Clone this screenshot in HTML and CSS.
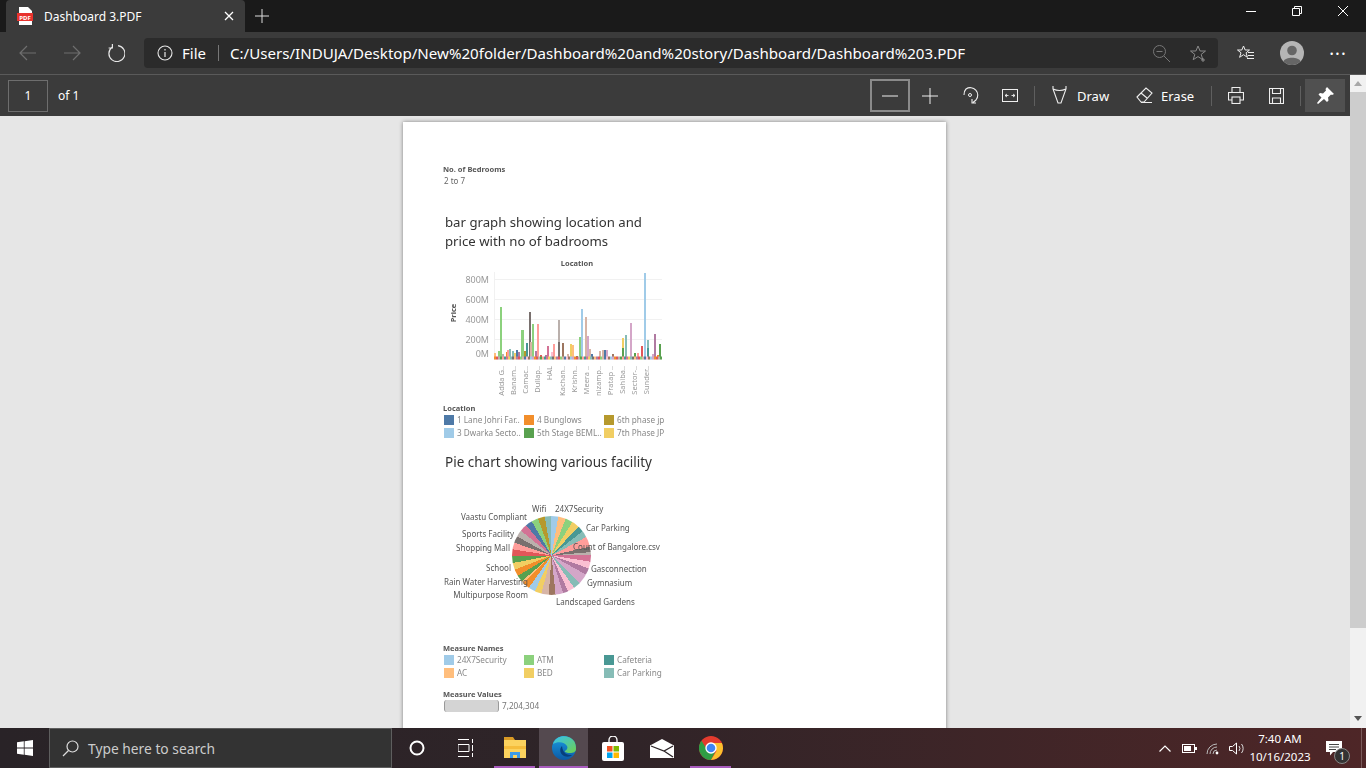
FILE: index.html
```html
<!DOCTYPE html>
<html lang="en">
<head>
    <meta charset="UTF-8">
    <title>Dashboard 3.PDF</title>
    <link rel="stylesheet" href="styles.css">
</head>
<body>
    <div class="titlebar">
        <div class="tab">
            <svg class="tab-icon" width="16" height="18" viewBox="0 0 16 18">
                <path d="M2 0h9l4 4v14H2z" fill="#fff"/>
                <rect x="0" y="6" width="16" height="8" fill="#e8322d"/>
                <text x="8" y="12.5" class="tab-icon-text">PDF</text>
            </svg>
            <span class="tab-title">Dashboard 3.PDF</span>
            <svg class="tab-close" width="10" height="10" viewBox="0 0 10 10"><path d="M1 1l8 8M9 1l-8 8" stroke="#fff" stroke-width="1.3"/></svg>
        </div>
        <svg class="new-tab" width="14" height="14" viewBox="0 0 14 14"><path d="M7 0v14M0 7h14" stroke="#ddd"/></svg>
        <div class="window-controls">
            <svg width="10" height="10" viewBox="0 0 10 10"><path d="M0 5.5h10" stroke="#fff"/></svg>
            <svg width="10" height="10" viewBox="0 0 10 10"><path d="M.5 2.5h7v7h-7zM2.5 2.5v-2h7v7h-2" fill="none" stroke="#fff"/></svg>
            <svg width="10" height="10" viewBox="0 0 10 10"><path d="M0 0l10 10M10 0L0 10" stroke="#fff"/></svg>
        </div>
    </div>

    <div class="addressbar">
        <button class="nav-btn"><svg width="18" height="16" viewBox="0 0 18 16"><path d="M17 8H1M8 1L1 8l7 7" fill="none" stroke="#6f6f6f" stroke-width="1.2"/></svg></button>
        <button class="nav-btn"><svg width="18" height="16" viewBox="0 0 18 16"><path d="M1 8h16M10 1l7 7-7 7" fill="none" stroke="#6f6f6f" stroke-width="1.2"/></svg></button>
        <button class="nav-btn"><svg width="18" height="18" viewBox="0 0 18 18"><path d="M5 3.2A8 8 0 1 0 11 1.6M5.4 0v4H1.6" fill="none" stroke="#e6e6e6" stroke-width="1.2"/></svg></button>
        <div class="address">
            <svg class="info-icon" width="16" height="16" viewBox="0 0 16 16"><circle cx="8" cy="8" r="7" fill="none" stroke="#e6e6e6" stroke-width="1.1"/><path d="M8 7v5M8 4v1.4" stroke="#e6e6e6" stroke-width="1.2"/></svg>
            <span class="scheme">File</span>
            <span class="address-divider"></span>
            <span class="url">C:/Users/INDUJA/Desktop/New%20folder/Dashboard%20and%20story/Dashboard/Dashboard%203.PDF</span>
            <svg class="zoom-out" width="17" height="17" viewBox="0 0 17 17"><circle cx="6.5" cy="6.5" r="6" fill="none" stroke="#777"/><path d="M11 11l6 6M3.5 6.5h6" stroke="#777"/></svg>
            <svg class="fav" width="17" height="17" viewBox="0 0 17 17"><path d="M8 1l2.1 5h5.4l-4.300 3.400 1.600 5.300L8 11.600l-4.800 3.100 1.600-5.300L.5 6H5.900z" fill="none" stroke="#8a8a8a"/><path d="M13 13v4M11 15h4" stroke="#8a8a8a"/></svg>
        </div>
        <div class="side-buttons">
            <button class="side-btn"><svg width="18" height="17" viewBox="0 0 18 17"><path d="M6.500 1l1.700 4h4.300l-3.400 2.800 1.300 4.500-3.900-2.600-3.900 2.600L4 7.800.5 5h4.300z" fill="none" stroke="#eee"/><path d="M11 7.500h6M11 10.500h6M10 13.500h7" stroke="#eee"/></svg></button>
            <button class="side-btn"><svg width="24" height="24" viewBox="0 0 24 24"><circle cx="12" cy="12" r="12" fill="#b5b5b5"/><circle cx="12" cy="9.500" r="4.800" fill="#666"/><path d="M3.500 20.500C5 15.500 19 15.500 20.500 20.500A12 12 0 0 1 3.500 20.500z" fill="#666"/></svg></button>
            <button class="side-btn more">&middot;&middot;&middot;</button>
        </div>
    </div>

    <div class="workspace">
        <div class="viewer-column">
            <div class="pdf-toolbar">
                <div class="page-box">1</div>
                <span class="page-count">of 1</span>
                <div class="pdf-tools">
                    <button class="tool-btn tool-active"><svg width="16" height="2" viewBox="0 0 16 2"><path d="M0 1h16" stroke="#eee"/></svg></button>
                    <button class="tool-btn"><svg width="16" height="16" viewBox="0 0 16 16"><path d="M8 0v16M0 8h16" stroke="#eee"/></svg></button>
                    <button class="tool-btn"><svg width="17" height="19" viewBox="0 0 17 19"><path d="M2 9a7.500 7.500 0 0 1 2-6 7.500 7.500 0 0 1 10 11l-3 2.500M10 13v4h4" fill="none" stroke="#eee" stroke-width="1.100"/><circle cx="8" cy="9" r="1.500" fill="none" stroke="#eee"/></svg></button>
                    <button class="tool-btn"><svg width="16" height="13" viewBox="0 0 16 13"><rect x=".5" y=".5" width="15" height="12" fill="none" stroke="#eee"/><path d="M3 6.500h3.500M3 6.500l2-1.500M3 6.500l2 1.500M9.500 6.500H13M13 6.500l-2-1.500M13 6.500l-2 1.500" fill="none" stroke="#eee" stroke-width=".9"/></svg></button>
                    <span class="tool-divider"></span>
                    <button class="label-btn draw-btn"><svg width="15" height="20" viewBox="0 0 15 20"><path d="M1 0v3l5 14h3l5-14V0M1 3q6.500 3 13 0" fill="none" stroke="#eee" stroke-width="1.100"/></svg>Draw</button>
                    <button class="label-btn erase-btn"><svg width="17" height="17" viewBox="0 0 17 17"><path d="M1 10l9-9 6 5-8 9H5zM5 6l6 5" fill="none" stroke="#eee" stroke-width="1.100"/><path d="M5 15.500h11" stroke="#eee"/></svg>Erase</button>
                    <span class="tool-divider after-erase"></span>
                    <button class="tool-btn"><svg width="16" height="17" viewBox="0 0 16 17"><path d="M4 5V.5h8V5M4 13H.5V5.500h15V13H12" fill="none" stroke="#eee" stroke-width="1.100"/><rect x="4" y="10" width="8" height="6.500" fill="none" stroke="#eee" stroke-width="1.100"/></svg></button>
                    <button class="tool-btn"><svg width="15" height="16" viewBox="0 0 15 16"><path d="M.5.500h14v15H.5zM3.500.500v5h8v-5M3.500 15.500V10h8v5.500" fill="none" stroke="#eee" stroke-width="1.100"/></svg></button>
                    <span class="tool-divider"></span>
                    <button class="tool-btn pin-btn"><svg width="17" height="17" viewBox="0 0 17 17"><path d="M10 0l7 7-2 1-1-.5-3 3 .5 3-1.500 1.500-3-3L1 17l-1-1 4.500-5.500-3-3L3 6l3 .5 3-3L8.500 2z" fill="#fff"/></svg></button>
                </div>
            </div>

            <div class="viewer">
                <div class="page">
                    <div class="page-content">
                        <div class="filter-block">
                            <div class="legend-title">No. of Bedrooms</div>
                            <div class="filter-value">2 to 7</div>
                        </div>

                        <h2 class="chart-title bar-title">bar graph showing location and<br>price with no of badrooms</h2>

                        <svg class="bar-chart" width="220" height="147" viewBox="443 256 220 147">
                            <defs>
                                <pattern id="smallBars" x="494" y="0" width="40" height="10" patternUnits="userSpaceOnUse">
                                    <rect x="0" width="2" height="10" fill="#f28e2b"/><rect x="2" width="2" height="10" fill="#e15759"/>
                                    <rect x="4" width="2" height="10" fill="#bab0ac"/><rect x="6" width="2" height="10" fill="#59a14f"/>
                                    <rect x="8" width="2" height="10" fill="#ff9d9a"/><rect x="10" width="2" height="10" fill="#499894"/>
                                    <rect x="12" width="2" height="10" fill="#d37295"/><rect x="14" width="2" height="10" fill="#f1ce63"/>
                                    <rect x="16" width="2" height="10" fill="#86bcb6"/><rect x="18" width="2" height="10" fill="#79706e"/>
                                    <rect x="20" width="2" height="10" fill="#ffbe7d"/><rect x="22" width="2" height="10" fill="#b07aa1"/>
                                    <rect x="24" width="2" height="10" fill="#e15759"/><rect x="26" width="2" height="10" fill="#8cd17d"/>
                                    <rect x="28" width="2" height="10" fill="#d7b5a6"/><rect x="30" width="2" height="10" fill="#4e79a7"/>
                                    <rect x="32" width="2" height="10" fill="#fabfd2"/><rect x="34" width="2" height="10" fill="#9d7660"/>
                                    <rect x="36" width="2" height="10" fill="#a0cbe8"/><rect x="38" width="2" height="10" fill="#d4a6c8"/>
                                </pattern>
                            </defs>
                            <path class="grid" d="M494 279.500H662M494 299.500H662M494 319.500H662M494 339.500H662M494 359.500H662M494.500 272V360"/>
                            <text class="axis-title" x="577" y="266" text-anchor="middle">Location</text>
                            <text class="axis-title" transform="translate(456 313) rotate(-90)" text-anchor="middle">Price</text>
                            <text class="axis-value" x="489" y="283">800M</text>
                            <text class="axis-value" x="489" y="303">600M</text>
                            <text class="axis-value" x="489" y="323">400M</text>
                            <text class="axis-value" x="489" y="343">200M</text>
                            <text class="axis-value" x="489" y="357">0M</text>

                            <rect x="494" y="353" width="2" height="6" fill="#ffbe7d"/>
                            <rect x="498" y="351" width="2" height="8" fill="#8cd17d"/>
                            <rect x="500" y="307" width="2" height="52" fill="#8cd17d"/>
                            <rect x="502" y="354" width="2" height="5" fill="#bab0ac"/>
                            <rect x="506" y="352" width="2" height="7" fill="#f28e2b"/>
                            <rect x="507" y="350" width="2" height="9" fill="#ff9d9a"/>
                            <rect x="509" y="349" width="2" height="10" fill="#86bcb6"/>
                            <rect x="512" y="351" width="2" height="8" fill="#86bcb6"/>
                            <rect x="514" y="353" width="2" height="6" fill="#f1ce63"/>
                            <rect x="516" y="350" width="2" height="9" fill="#4e79a7"/>
                            <rect x="518" y="352" width="2" height="7" fill="#b07aa1"/>
                            <rect x="521" y="330" width="3" height="29" fill="#8cd17d"/>
                            <rect x="524" y="351" width="2" height="8" fill="#b6992d"/>
                            <rect x="526" y="343" width="2" height="16" fill="#499894"/>
                            <rect x="529" y="312" width="2" height="47" fill="#79706e"/>
                            <rect x="530" y="342" width="2" height="17" fill="#d7b5a6"/>
                            <rect x="532" y="324" width="2" height="35" fill="#8cd17d"/>
                            <rect x="535" y="351" width="2" height="8" fill="#b07aa1"/>
                            <rect x="537" y="324" width="2" height="35" fill="#ff9d9a"/>
                            <rect x="540" y="355" width="2" height="4" fill="#e15759"/>
                            <rect x="547" y="346" width="2" height="13" fill="#d37295"/>
                            <rect x="545" y="355" width="2" height="4" fill="#b07aa1"/>
                            <rect x="553" y="344" width="2" height="15" fill="#ff9d9a"/>
                            <rect x="551" y="352" width="2" height="7" fill="#fabfd2"/>
                            <rect x="558" y="320" width="2" height="39" fill="#bab0ac"/>
                            <rect x="558" y="342" width="2" height="17" fill="#79706e"/>
                            <rect x="562" y="343" width="2" height="16" fill="#9d7660"/>
                            <rect x="567" y="354" width="2" height="5" fill="#d7b5a6"/>
                            <rect x="570" y="344" width="2" height="15" fill="#f1ce63"/>
                            <rect x="572" y="345" width="2" height="14" fill="#ffbe7d"/>
                            <rect x="576" y="356" width="2" height="3" fill="#59a14f"/>
                            <rect x="579" y="337" width="2" height="22" fill="#8cd17d"/>
                            <rect x="581" y="309" width="2" height="50" fill="#a0cbe8"/>
                            <rect x="585" y="317" width="2" height="42" fill="#d7b5a6"/>
                            <rect x="587" y="336" width="2" height="23" fill="#d4a6c8"/>
                            <rect x="589" y="349" width="2" height="10" fill="#d7b5a6"/>
                            <rect x="591" y="354" width="2" height="5" fill="#4e79a7"/>
                            <rect x="599" y="351" width="2" height="8" fill="#d7b5a6"/>
                            <rect x="602" y="350" width="2" height="9" fill="#d7b5a6"/>
                            <rect x="604" y="350" width="2" height="9" fill="#4e79a7"/>
                            <rect x="606" y="350" width="2" height="9" fill="#d4a6c8"/>
                            <rect x="612" y="354" width="2" height="5" fill="#9d7660"/>
                            <rect x="622" y="338" width="2" height="21" fill="#f1ce63"/>
                            <rect x="622" y="348" width="2" height="11" fill="#59a14f"/>
                            <rect x="625" y="335" width="2" height="24" fill="#86bcb6"/>
                            <rect x="630" y="323" width="2" height="36" fill="#d4a6c8"/>
                            <rect x="634" y="353" width="2" height="6" fill="#59a14f"/>
                            <rect x="637" y="353" width="2" height="6" fill="#ff9d9a"/>
                            <rect x="641" y="346" width="2" height="13" fill="#e15759"/>
                            <rect x="644" y="273" width="2" height="86" fill="#a0cbe8"/>
                            <rect x="647" y="340" width="2" height="19" fill="#86bcb6"/>
                            <rect x="647" y="348" width="2" height="11" fill="#499894"/>
                            <rect x="652" y="354" width="2" height="5" fill="#d4a6c8"/>
                            <rect x="654" y="334" width="2" height="25" fill="#b07aa1"/>
                            <rect x="657" y="355" width="2" height="4" fill="#f28e2b"/>
                            <rect x="659" y="344" width="2" height="15" fill="#59a14f"/>
                            <rect x="494" y="356.500" width="168" height="3" fill="url(#smallBars)"/>

                            <text class="axis-label" transform="translate(504 366) rotate(-90)">Adda G..</text>
                            <text class="axis-label" transform="translate(516 366) rotate(-90)">Banam..</text>
                            <text class="axis-label" transform="translate(528 366) rotate(-90)">Camac..</text>
                            <text class="axis-label" transform="translate(540 366) rotate(-90)">Dullap..</text>
                            <text class="axis-label" transform="translate(552 366) rotate(-90)">HAL</text>
                            <text class="axis-label" transform="translate(565 366) rotate(-90)">Kachan..</text>
                            <text class="axis-label" transform="translate(577 366) rotate(-90)">Krishn..</text>
                            <text class="axis-label" transform="translate(589 366) rotate(-90)">Meera ..</text>
                            <text class="axis-label" transform="translate(601 366) rotate(-90)">nizamp..</text>
                            <text class="axis-label" transform="translate(613 366) rotate(-90)">Pratap ..</text>
                            <text class="axis-label" transform="translate(625 366) rotate(-90)">Sahiba..</text>
                            <text class="axis-label" transform="translate(637 366) rotate(-90)">Sector-..</text>
                            <text class="axis-label" transform="translate(649 366) rotate(-90)">Sunder..</text>
                        </svg>

                        <div class="legend location-legend">
                            <div class="legend-title">Location</div>
                            <div class="legend-grid">
                                <div class="legend-item"><span class="swatch c-blue"></span>1 Lane Johri Far..</div>
                                <div class="legend-item"><span class="swatch c-orange"></span>4 Bunglows</div>
                                <div class="legend-item"><span class="swatch c-olive"></span>6th phase jp</div>
                                <div class="legend-item"><span class="swatch c-lightblue"></span>3 Dwarka Secto..</div>
                                <div class="legend-item"><span class="swatch c-green"></span>5th Stage BEML..</div>
                                <div class="legend-item"><span class="swatch c-yellow"></span>7th Phase JP</div>
                            </div>
                        </div>

                        <h2 class="chart-title pie-title">Pie chart showing various facility</h2>

                        <div class="pie-chart">
                            <div class="pie"></div>
                            <svg class="pie-labels" width="225" height="112" viewBox="440 500 225 112">
                                <text x="532" y="512">Wifi</text>
                                <text x="555" y="512">24X7Security</text>
                                <text x="586" y="531">Car Parking</text>
                                <text x="527" y="520" text-anchor="end">Vaastu Compliant</text>
                                <text x="514" y="537" text-anchor="end">Sports Facility</text>
                                <text x="510" y="551" text-anchor="end">Shopping Mall</text>
                                <text x="573" y="550">Count of Bangalore.csv</text>
                                <text x="511" y="571" text-anchor="end">School</text>
                                <text x="591" y="572">Gasconnection</text>
                                <text x="587" y="586">Gymnasium</text>
                                <text x="528" y="585" text-anchor="end">Rain Water Harvesting</text>
                                <text x="528" y="598" text-anchor="end">Multipurpose Room</text>
                                <text x="556" y="605">Landscaped Gardens</text>
                            </svg>
                        </div>

                        <div class="legend measure-legend">
                            <div class="legend-title">Measure Names</div>
                            <div class="legend-grid">
                                <div class="legend-item"><span class="swatch c-lightblue"></span>24X7Security</div>
                                <div class="legend-item"><span class="swatch c-lightgreen"></span>ATM</div>
                                <div class="legend-item"><span class="swatch c-teal"></span>Cafeteria</div>
                                <div class="legend-item"><span class="swatch c-peach"></span>AC</div>
                                <div class="legend-item"><span class="swatch c-yellow"></span>BED</div>
                                <div class="legend-item"><span class="swatch c-lightteal"></span>Car Parking</div>
                            </div>
                        </div>

                        <div class="legend values-legend">
                            <div class="legend-title">Measure Values</div>
                            <div class="value-row"><span class="value-bar"></span>7,204,304</div>
                        </div>
                    </div>
                </div>
            </div>
        </div>
        <div class="scrollbar">
            <span class="arrow-up"></span>
            <div class="thumb"></div>
            <span class="arrow-down"></span>
        </div>
    </div>

    <div class="taskbar">
        <div class="start"><svg width="16" height="16" viewBox="0 0 16 16"><path d="M0 2.300l6.800-1v6.300H0zM7.600 1.200L16 0v7.600H7.600zM0 8.400h6.800v6.300l-6.800-1zM7.600 8.400H16V16l-8.400-1.200z" fill="#fff"/></svg></div>
        <div class="search">
            <svg width="17" height="17" viewBox="0 0 17 17"><circle cx="10.500" cy="6.500" r="5.500" fill="none" stroke="#ddd" stroke-width="1.200"/><path d="M6.500 10.500L1 16" stroke="#ddd" stroke-width="1.300"/></svg>
            <span>Type here to search</span>
        </div>
        <div class="task-btn"><svg width="16" height="16" viewBox="0 0 16 16"><circle cx="8" cy="8" r="6.500" fill="none" stroke="#fff" stroke-width="2"/></svg></div>
        <div class="task-btn"><svg width="16" height="18" viewBox="0 0 16 18"><path d="M0 .5h11M0 17.500h11M0 5.500h11v7H0zM14.500 0v4M14.500 6v6M14.500 14v4" fill="none" stroke="#fff"/></svg></div>
        <div class="task-btn running"><svg width="22" height="24" viewBox="0 0 22 24"><path d="M0 1h9l2 3H0z" fill="#d99a25"/><rect y="4" width="22" height="18" fill="#fbd25e"/><rect y="10" width="22" height="3" fill="#f5bd3c"/><path d="M6 22v-6h10v6h-3v-3H9v3z" fill="#3c9be8"/></svg></div>
        <div class="task-btn running current"><svg width="24" height="24" viewBox="0 0 24 24">
            <defs>
                <linearGradient id="edgeBlue" x1="0" y1="0" x2="0" y2="1"><stop offset="0" stop-color="#1b9de2"/><stop offset="1" stop-color="#0c59a4"/></linearGradient>
                <linearGradient id="edgeGreen" x1="0" y1="0" x2="1" y2="1"><stop offset="0" stop-color="#35c1f1"/><stop offset="1" stop-color="#6fd14f"/></linearGradient>
            </defs>
            <circle cx="12" cy="12" r="12" fill="url(#edgeBlue)"/>
            <path d="M1 8C3 0 14-2 20 3c4 3 4 8 4 10 0 3-3 4-6 4-3 0-6-1-5-2 2-1 3-3 2-5-2-4-9-5-14-2z" fill="url(#edgeGreen)"/>
            <path d="M10 10c-3 3-2 8 2 10 3 1 6 1 8-1-5 0-9-1-10-9z" fill="#073f7d"/>
        </svg></div>
        <div class="task-btn"><svg width="22" height="25" viewBox="0 0 22 25"><path d="M7 6V4a4 4 0 0 1 8 0v2" fill="none" stroke="#fff" stroke-width="1.300"/><rect y="6" width="22" height="19" rx="2" fill="#fff"/><rect x="5" y="10" width="5.500" height="5.500" fill="#f25022"/><rect x="11.500" y="10" width="5.500" height="5.500" fill="#7fba00"/><rect x="5" y="16.500" width="5.500" height="5.500" fill="#00a4ef"/><rect x="11.500" y="16.500" width="5.500" height="5.500" fill="#ffb900"/></svg></div>
        <div class="task-btn"><svg width="24" height="19" viewBox="0 0 24 19"><path d="M12 0l12 6.500V19H0V6.500z" fill="#fff"/><path d="M1 7l13 5 9-5M14 12l9 6" fill="none" stroke="#2b2326" stroke-width="1.300"/></svg></div>
        <div class="task-btn running"><svg width="24" height="24" viewBox="0 0 24 24"><circle cx="12" cy="12" r="12" fill="#e33b2e"/><path d="M12 12L1.600 18A12 12 0 0 1 2.500 4.700L7 12z" fill="#2f9e44"/><path d="M1.600 18L8 12l4 0 4 4-4 8A12 12 0 0 1 1.600 18z" fill="#2f9e44"/><path d="M12 7h10.900A12 12 0 0 1 12 24l5.500-9z" fill="#fbc02d"/><circle cx="12" cy="12" r="5.700" fill="#fff"/><circle cx="12" cy="12" r="4.300" fill="#3f85f4"/></svg></div>

        <div class="tray">
            <div class="tray-icon"><svg width="12" height="7" viewBox="0 0 12 7"><path d="M.5 6.500L6 1l5.500 5.500" fill="none" stroke="#fff" stroke-width="1.200"/></svg></div>
            <div class="tray-icon"><svg width="15" height="9" viewBox="0 0 15 9"><rect x=".5" y=".5" width="12" height="8" fill="none" stroke="#fff"/><rect x="2" y="2" width="7" height="5" fill="#fff"/><rect x="13" y="3" width="2" height="3" fill="#fff"/></svg></div>
            <div class="tray-icon"><svg width="14" height="13" viewBox="0 0 14 13"><path d="M1 12A10 10 0 0 1 11 2M4 12a7 7 0 0 1 7-7M7 12a4 4 0 0 1 4-4" fill="none" stroke="#bbb"/><circle cx="11" cy="11" r="1.400" fill="#fff"/></svg></div>
            <div class="tray-icon"><svg width="16" height="13" viewBox="0 0 16 13"><path d="M.5 4.500h3l4-3.500v11l-4-3.500h-3z" fill="none" stroke="#fff"/><path d="M10 4a4 4 0 0 1 0 5M12.500 2a7 7 0 0 1 0 9" fill="none" stroke="#ddd"/></svg></div>
            <div class="clock"><div>7:40 AM</div><div>10/16/2023</div></div>
            <div class="notify">
                <svg width="16" height="15" viewBox="0 0 16 15"><path d="M0 0h16v11H7l-3 3.500V11H0z" fill="#fff"/><path d="M3 3.500h10M3 6h10M3 8.500h7" stroke="#444"/></svg>
                <span class="notify-count">1</span>
            </div>
            <div class="show-desktop"></div>
        </div>
    </div>
</body>
</html>
```

FILE: styles.css
```css
* {
    box-sizing: border-box;
}

html, body {
    margin: 0;
    height: 768px;
    overflow: hidden;
}

body {
    display: flex;
    flex-direction: column;
    font-family: "Noto Sans", "Open Sans", sans-serif;
    background-color: #3b3b3b;
    color: #fff;
}

button {
    border: 0;
    padding: 0;
    background: none;
    color: inherit;
    font: inherit;
    display: flex;
    align-items: center;
    justify-content: center;
}

/* title bar */
.titlebar {
    height: 32px;
    flex: none;
    display: flex;
    align-items: center;
    background-color: #1a1a1a;
}

.tab {
    width: 239px;
    height: 32px;
    margin-left: 6px;
    padding: 0 11px;
    display: flex;
    align-items: center;
    background-color: #3b3b3b;
    border-radius: 4px 4px 0 0;
}

.tab-icon-text {
    font-size: 6px;
    font-weight: bold;
    fill: #fff;
    text-anchor: middle;
}

.tab-title {
    margin-left: 11px;
    font-size: 12px;
    flex: 1;
}

.new-tab {
    margin-left: 10px;
}

.window-controls {
    margin-left: auto;
    width: 120px;
    display: flex;
    justify-content: space-between;
    padding: 0 18px 10px 0;
}

/* address bar */
.addressbar {
    height: 43px;
    flex: none;
    display: flex;
    align-items: flex-start;
    padding: 6px 5px 0 6px;
    border-bottom: 1px solid #5a5a5a;
}

.nav-btn {
    width: 44px;
    height: 30px;
}

.address {
    width: 1074px;
    height: 30px;
    margin-left: 6px;
    padding: 0 11px 0 13px;
    display: flex;
    align-items: center;
    background-color: #2b2b2b;
    border-radius: 4px;
}

.scheme {
    margin-left: 9px;
    font-size: 15px;
}

.address-divider {
    width: 1px;
    height: 16px;
    margin: 0 11px 0 12px;
    background-color: #777;
}

.url {
    font-size: 15.1px;
    white-space: nowrap;
}

.zoom-out {
    margin-left: auto;
}

.fav {
    margin-left: 20px;
}

.side-buttons {
    display: flex;
    margin-left: 5px;
}

.side-btn {
    width: 46px;
    height: 30px;
}

.more {
    font-size: 18px;
    letter-spacing: 1px;
}

/* pdf toolbar and page */
.workspace {
    flex: 1;
    display: flex;
    min-height: 0;
}

.viewer-column {
    width: 1350px;
    display: flex;
    flex-direction: column;
}

.pdf-toolbar {
    height: 41px;
    flex: none;
    display: flex;
    align-items: center;
    padding-left: 8px;
}

.page-box {
    width: 40px;
    height: 32px;
    border: 1px solid #6e6e6e;
    font-size: 12px;
    display: flex;
    align-items: center;
    justify-content: center;
}

.page-count {
    margin-left: 10px;
    font-size: 12px;
}

.pdf-tools {
    margin-left: auto;
    padding-right: 5px;
    display: flex;
    align-items: center;
}

.tool-btn {
    width: 40px;
    height: 33px;
}

.tool-active {
    border: 2px solid #8a8a8a;
}

.tool-divider {
    width: 1px;
    height: 20px;
    margin: 0 4px;
    background-color: #5f5f5f;
}

.label-btn {
    font-size: 13px;
    justify-content: flex-start;
    height: 33px;
}

.label-btn svg {
    margin-right: 10px;
}

.draw-btn {
    width: 97px;
    padding-left: 13px;
}

.erase-btn {
    width: 74px;
}

.erase-btn svg {
    margin-right: 8px;
}

.after-erase {
    margin: 0 4px 0 1px;
}

.pin-btn {
    background-color: #505050;
}

.viewer {
    flex: 1;
    min-height: 0;
    overflow: hidden;
    background-color: #e6e6e6;
    padding-top: 6px;
}

.page {
    width: 543px;
    height: 700px;
    margin-left: 403px;
    background-color: #fff;
    box-shadow: 0 0 4px rgba(0, 0, 0, 0.45);
}

.page-content {
    padding: 42px 0 0 40px;
    filter: blur(0.3px);
    color: #666;
}

.legend-title {
    font-size: 7.5px;
    line-height: 10px;
    font-weight: bold;
    color: #555;
}

.filter-value {
    margin: 1px 0 0 1px;
    font-size: 8px;
    line-height: 11px;
    color: #666;
}

.chart-title {
    margin: 0 0 0 2px;
    font-size: 13.2px;
    line-height: 19px;
    font-weight: normal;
    color: #333;
}

.bar-title {
    padding-top: 27px;
}

.bar-chart {
    display: block;
    margin-top: 5px;
}

.grid {
    stroke: #f1f1f1;
    fill: none;
}

.axis-title {
    font-size: 7.5px;
    font-weight: bold;
    fill: #555;
}

.axis-value {
    font-size: 9px;
    fill: #999;
    text-anchor: end;
}

.axis-label {
    font-size: 7.5px;
    fill: #999;
    text-anchor: end;
}

.legend-grid {
    display: grid;
    grid-template-columns: repeat(3, 80px);
    width: 219px;
    padding-left: 1px;
}

.legend-item {
    display: flex;
    align-items: center;
    height: 13px;
    font-size: 8.2px;
    white-space: nowrap;
    color: #888;
}

.swatch {
    width: 10px;
    height: 10px;
    margin-right: 3px;
    flex: none;
}

.c-blue { background-color: #4e79a7; }
.c-orange { background-color: #f28e2b; }
.c-olive { background-color: #b6992d; }
.c-lightblue { background-color: #a0cbe8; }
.c-green { background-color: #59a14f; }
.c-yellow { background-color: #f1ce63; }
.c-lightgreen { background-color: #8cd17d; }
.c-teal { background-color: #499894; }
.c-peach { background-color: #ffbe7d; }
.c-lightteal { background-color: #86bcb6; }

.pie-title {
    margin-top: 14px;
    font-size: 13.5px;
}

.pie-chart {
    position: relative;
    width: 225px;
    height: 112px;
    margin: 28px 0 0 -3px;
}

.pie {
    position: absolute;
    left: 72px;
    top: 16px;
    width: 79px;
    height: 79px;
    border-radius: 50%;
    background: conic-gradient(
        #a0cbe8 0 10deg, #ffbe7d 10deg 21deg, #8cd17d 21deg 32deg, #f1ce63 32deg 43deg,
        #499894 43deg 52deg, #86bcb6 52deg 62deg, #ff9d9a 62deg 77deg, #79706e 77deg 85deg,
        #bab0ac 85deg 89deg, #d37295 89deg 99deg, #fabfd2 99deg 109deg, #b07aa1 109deg 119deg,
        #d4a6c8 119deg 134deg, #86bcb6 134deg 145deg, #fabfd2 145deg 155deg, #b07aa1 155deg 163deg,
        #d4a6c8 163deg 174deg, #9d7660 174deg 184deg, #d7b5a6 184deg 195deg, #f1ce63 195deg 205deg,
        #a0cbe8 205deg 215deg, #f28e2b 215deg 225deg, #ffbe7d 225deg 229deg, #59a14f 229deg 239deg,
        #f28e2b 239deg 249deg, #f1ce63 249deg 259deg, #59a14f 259deg 269deg, #e15759 269deg 279deg,
        #ff9d9a 279deg 289deg, #79706e 289deg 299deg, #bab0ac 299deg 309deg, #d37295 309deg 320deg,
        #4e79a7 320deg 330deg, #8cd17d 330deg 340deg, #b6992d 340deg 350deg, #86bcb6 350deg 360deg
    );
}

.pie-labels {
    position: absolute;
    left: 0;
    top: 0;
}

.pie-labels text {
    font-size: 8px;
    fill: #555;
}

.measure-legend {
    margin-top: 31px;
}

.values-legend {
    margin-top: 10px;
}

.value-row {
    display: flex;
    align-items: center;
    height: 13px;
    font-size: 8.2px;
    color: #777;
}

.value-bar {
    width: 55px;
    height: 12px;
    margin: 0 3px 0 1px;
    background-color: #d4d4d4;
    border-left: 1px solid #999;
    border-right: 1px solid #999;
    border-radius: 3px;
}

/* scrollbar */
.scrollbar {
    width: 16px;
    display: flex;
    flex-direction: column;
    align-items: center;
    background-color: #f1f1f1;
    padding-top: 6px;
}

.arrow-up, .arrow-down {
    width: 0;
    height: 0;
    border-left: 4px solid transparent;
    border-right: 4px solid transparent;
}

.arrow-up {
    border-bottom: 5px solid #a8a8a8;
}

.arrow-down {
    margin-top: 88px;
    border-top: 5px solid #555;
}

.thumb {
    width: 100%;
    height: 536px;
    margin-top: 6px;
    background-color: #cdcdcd;
}

/* taskbar */
.taskbar {
    height: 40px;
    flex: none;
    display: flex;
    align-items: stretch;
    background: linear-gradient(90deg, #292327 0%, #2f2428 45%, #4e2627 100%);
}

.start {
    width: 49px;
    display: flex;
    align-items: center;
    justify-content: center;
}

.search {
    width: 343px;
    display: flex;
    align-items: center;
    padding-left: 12px;
    background-color: #333;
    border: 1px solid #5e5e5e;
    font-size: 13.8px;
    color: #ccc;
}

.search span {
    margin-left: 9px;
}

.task-btn {
    position: relative;
    width: 49px;
    display: flex;
    align-items: center;
    justify-content: center;
}

.running::after {
    content: "";
    position: absolute;
    left: 4px;
    right: 4px;
    bottom: 0;
    height: 2px;
    background-color: #a85bbd;
}

.current {
    background-color: #54494f;
}

.current::after {
    left: 0;
    right: 0;
}

.tray {
    margin-left: auto;
    display: flex;
    align-items: stretch;
}

.tray-icon {
    width: 24px;
    display: flex;
    align-items: center;
    justify-content: center;
}

.clock {
    width: 64px;
    margin-left: -1px;
    display: flex;
    flex-direction: column;
    justify-content: center;
    align-items: center;
    font-size: 11.5px;
    line-height: 18px;
}

.notify {
    position: relative;
    width: 44px;
    display: flex;
    align-items: center;
    justify-content: center;
}

.notify-count {
    position: absolute;
    left: 22px;
    top: 20px;
    width: 16px;
    height: 16px;
    border-radius: 50%;
    border: 1px solid #888;
    background-color: #333;
    font-size: 10px;
    line-height: 14px;
    text-align: center;
}

.show-desktop {
    width: 6px;
    border-right: 1px solid #7a5a5a;
    margin-right: 4px;
}
```
